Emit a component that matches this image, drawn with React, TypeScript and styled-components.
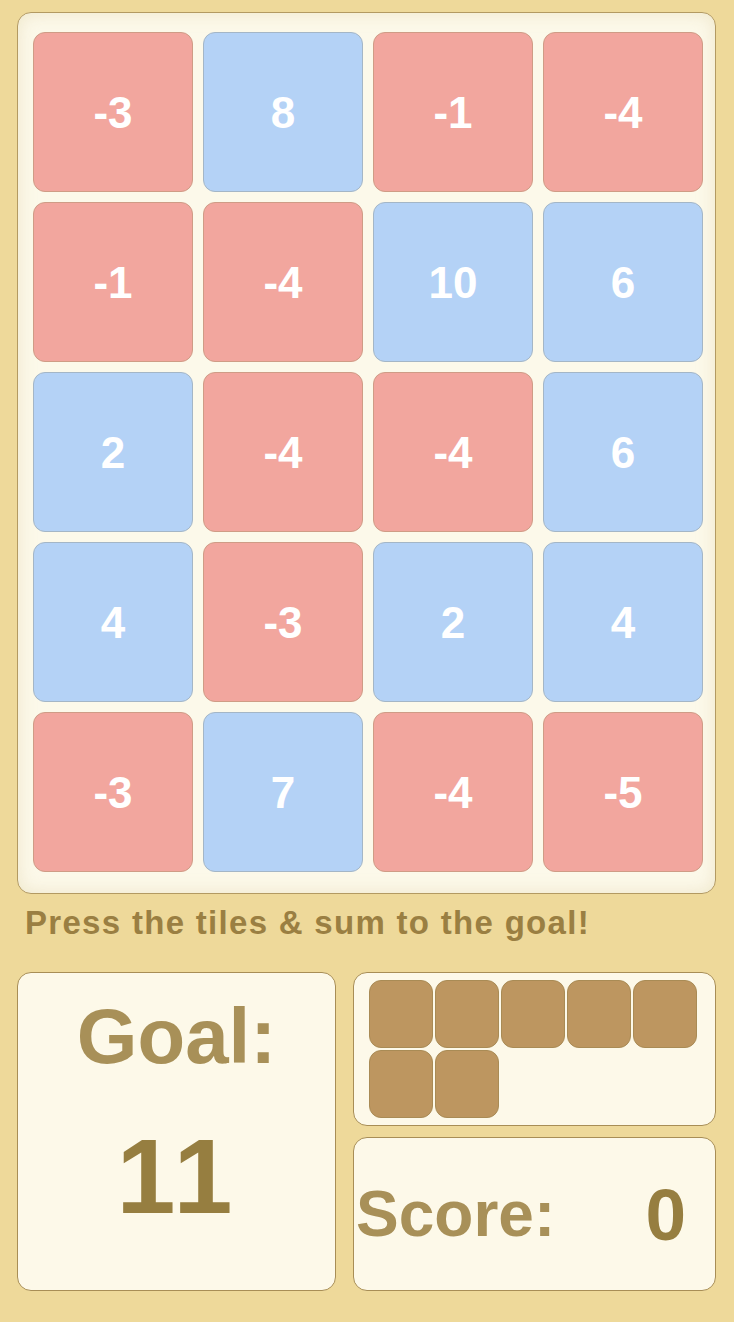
import React from "react";
import styled, { createGlobalStyle } from "styled-components";

const GlobalStyle = createGlobalStyle`
  html, body {
    margin: 0;
    padding: 0;
    background: #eed99a;
  }
  body {
    font-family: "Liberation Sans", Arial, sans-serif;
  }
`;

const Page = styled.div`
  width: 734px;
  height: 1322px;
  box-sizing: border-box;
  padding: 12px 18px 0 17px;
  background: #eed99a;
`;

const Board = styled.div`
  box-sizing: border-box;
  width: 699px;
  height: 882px;
  padding: 19px 12px 21px 15px;
  border: 1px solid #b39a62;
  border-radius: 14px;
  background: #fcf9ea;
  box-shadow: inset 0 0 18px rgba(214, 196, 140, 0.35);
  display: grid;
  grid-template-columns: repeat(4, 160px);
  grid-auto-rows: 160px;
  gap: 10px;
`;

const Tile = styled.button<{ $neg: boolean }>`
  box-sizing: border-box;
  width: 160px;
  height: 160px;
  padding: 2px 0 0;
  margin: 0;
  border-radius: 12px;
  border: 1px solid ${(p) => (p.$neg ? "#cf9c86" : "#a4b6c6")};
  background: ${(p) => (p.$neg ? "#f2a69e" : "#b4d2f6")};
  color: #ffffff;
  font-family: "Liberation Sans", Arial, sans-serif;
  font-weight: bold;
  font-size: 44px;
  display: flex;
  align-items: center;
  justify-content: center;
  cursor: pointer;
`;

const Hint = styled.div`
  margin: 9px 0 0 8px;
  height: 40px;
  line-height: 40px;
  font-size: 33px;
  letter-spacing: 1.3px;
  font-weight: bold;
  color: #9a7f42;
  white-space: nowrap;
`;

const Bottom = styled.div`
  margin-top: 29px;
  display: grid;
  grid-template-columns: 319px 363px;
  column-gap: 17px;
`;

const Panel = styled.div`
  box-sizing: border-box;
  border: 1px solid #a88e56;
  border-radius: 14px;
  background: #fdf9e9;
`;

const GoalPanel = styled(Panel)`
  height: 319px;
  display: flex;
  flex-direction: column;
  align-items: center;
  padding-top: 24px;
`;

const GoalLabel = styled.div`
  font-size: 78px;
  line-height: 78px;
  font-weight: bold;
  color: #a89058;
`;

const GoalValue = styled.div`
  margin-top: 48px;
  font-size: 106px;
  line-height: 106px;
  letter-spacing: 4px;
  font-weight: bold;
  color: #967e40;
`;

const RightCol = styled.div`
  display: flex;
  flex-direction: column;
  gap: 11px;
`;

const MovesPanel = styled(Panel)`
  height: 154px;
  padding: 7px 0 0 15px;
  display: grid;
  grid-template-columns: repeat(5, 64px);
  grid-auto-rows: 68px;
  gap: 2px;
  align-content: start;
`;

const Move = styled.div`
  box-sizing: border-box;
  border-radius: 12px;
  border: 1px solid #a98b55;
  background: #bd9660;
`;

const ScorePanel = styled(Panel)`
  height: 154px;
  display: flex;
  align-items: center;
  padding: 0 29px 0 2px;
`;

const ScoreLabel = styled.div`
  font-size: 64px;
  font-weight: bold;
  color: #a89058;
`;

const ScoreValue = styled.div`
  flex: 1;
  text-align: right;
  font-size: 73px;
  font-weight: bold;
  color: #967e40;
`;

const tiles = [-3, 8, -1, -4, -1, -4, 10, 6, 2, -4, -4, 6, 4, -3, 2, 4, -3, 7, -4, -5];

export default function App() {
  return (
    <>
      <GlobalStyle />
      <Page>
        <Board>
          {tiles.map((v, i) => (
            <Tile key={i} $neg={v < 0}>
              {v}
            </Tile>
          ))}
        </Board>
        <Hint>Press the tiles &amp; sum to the goal!</Hint>
        <Bottom>
          <GoalPanel>
            <GoalLabel>Goal:</GoalLabel>
            <GoalValue>11</GoalValue>
          </GoalPanel>
          <RightCol>
            <MovesPanel>
              {Array.from({ length: 7 }).map((_, i) => (
                <Move key={i} />
              ))}
            </MovesPanel>
            <ScorePanel>
              <ScoreLabel>Score:</ScoreLabel>
              <ScoreValue>0</ScoreValue>
            </ScorePanel>
          </RightCol>
        </Bottom>
      </Page>
    </>
  );
}
